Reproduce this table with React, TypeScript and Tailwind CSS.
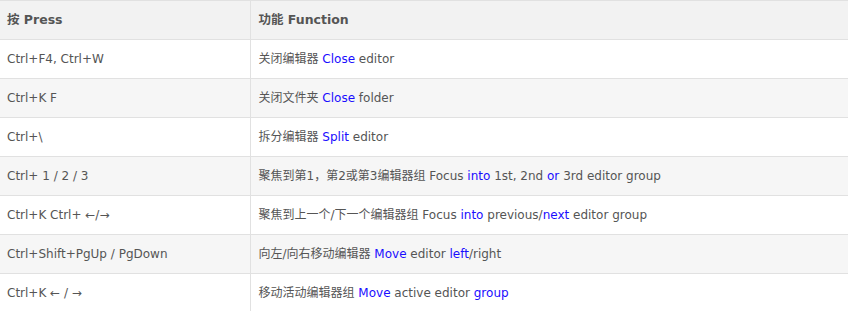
import React from "react";

type Seg = { t: string; b?: boolean };
const B = (t: string): Seg => ({ t, b: true });
const N = (t: string): Seg => ({ t });

const rows: { key: string; fn: Seg[] }[] = [
  { key: "Ctrl+F4, Ctrl+W", fn: [N("关闭编辑器 "), B("Close"), N(" editor")] },
  { key: "Ctrl+K F", fn: [N("关闭文件夹 "), B("Close"), N(" folder")] },
  { key: "Ctrl+\\", fn: [N("拆分编辑器 "), B("Split"), N(" editor")] },
  {
    key: "Ctrl+ 1 / 2 / 3",
    fn: [N("聚焦到第1，第2或第3编辑器组 Focus "), B("into"), N(" 1st, 2nd "), B("or"), N(" 3rd editor group")],
  },
  {
    key: "Ctrl+K Ctrl+ ←/→",
    fn: [N("聚焦到上一个/下一个编辑器组 Focus "), B("into"), N(" previous/"), B("next"), N(" editor group")],
  },
  {
    key: "Ctrl+Shift+PgUp / PgDown",
    fn: [N("向左/向右移动编辑器 "), B("Move"), N(" editor "), B("left"), N("/right")],
  },
  { key: "Ctrl+K ← / →", fn: [N("移动活动编辑器组 "), B("Move"), N(" active editor "), B("group")] },
];

export default function App() {
  return (
    <div
      className="w-[848px] h-[311px] overflow-hidden bg-white"
      style={{ fontFamily: '"DejaVu Sans", "Noto Sans CJK SC", sans-serif' }}
    >
      <table className="w-full border-collapse">
        <thead>
          <tr className="h-[39px] bg-[#f2f2f2] border-t border-b border-[#e1e1e1]">
            <th className="w-[250px] p-0 pl-[7px] text-left text-[12.5px] font-bold text-[#555] border-r border-[#e1e1e1]">
              按 Press
            </th>
            <th className="p-0 pl-[8px] text-left text-[12.5px] font-bold text-[#555]">功能 Function</th>
          </tr>
        </thead>
        <tbody>
          {rows.map((r, i) => (
            <tr
              key={i}
              className={`h-[39px] border-b border-[#e1e1e1] ${i % 2 === 1 ? "bg-[#f6f6f6]" : "bg-white"}`}
            >
              <td className="p-0 pl-[7px] text-[12px] text-[#555] border-r border-[#e1e1e1] whitespace-nowrap">
                {r.key}
              </td>
              <td className="p-0 pl-[8px] text-[12px] text-[#555] whitespace-nowrap">
                {r.fn.map((s, j) =>
                  s.b ? (
                    <span key={j} className="text-[#1a0dff]">
                      {s.t}
                    </span>
                  ) : (
                    <span key={j}>{s.t}</span>
                  )
                )}
              </td>
            </tr>
          ))}
        </tbody>
      </table>
    </div>
  );
}
